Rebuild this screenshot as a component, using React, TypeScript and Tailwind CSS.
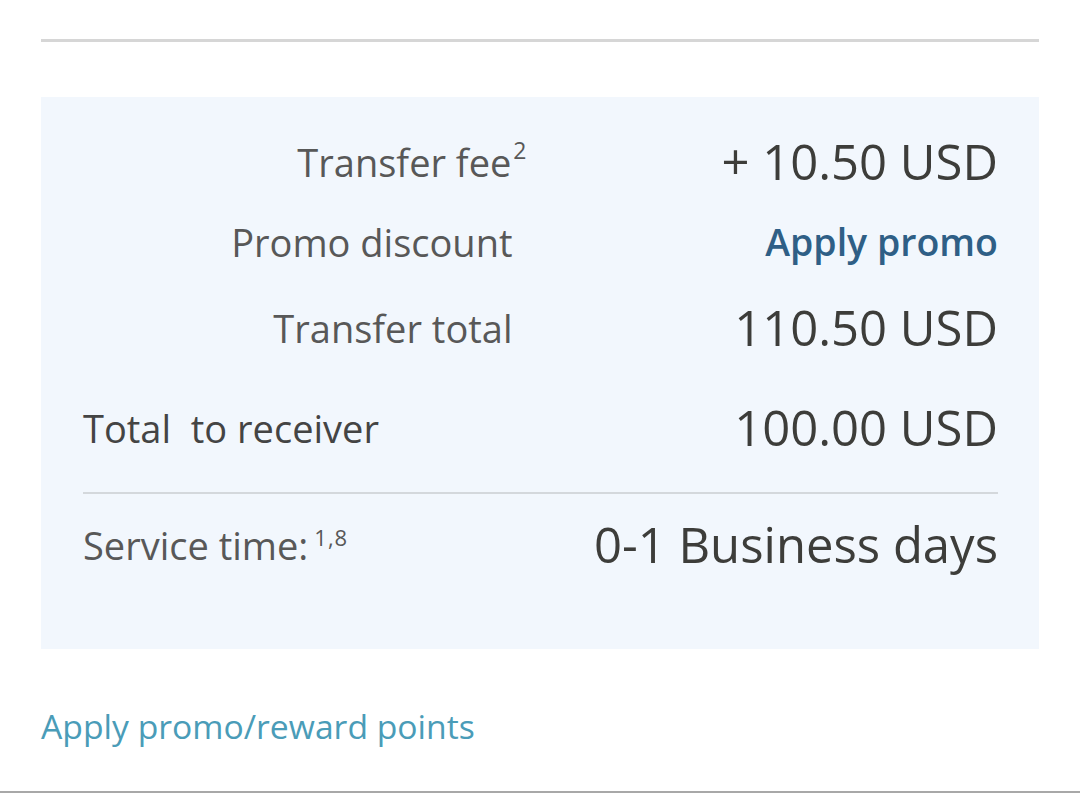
export default function App() {
  return (
    <div
      className="relative h-[793px] w-[1080px] overflow-hidden bg-white"
      style={{ fontFamily: '"Open Sans", "Noto Sans", sans-serif' }}
    >
      <div className="mx-[41px] pt-[39px]">
        <div className="h-[3px] bg-[#d6d6d6]" />

        <section className="mt-[55px] bg-[#f2f7fd] pb-[64px] pl-[42px] pr-[41px] pt-[25px]">
          <div className="grid h-[80px] grid-cols-2 items-center">
            <div className="whitespace-nowrap pr-[28px] text-right text-[38px] text-[#585858]">
              Transfer fee
              <sup className="-top-[18px] ml-[2px] mr-[-14px] text-[23px]">2</sup>
            </div>
            <div className="text-right text-[49px] text-[#3d3d3a]">+ 10.50 USD</div>
          </div>

          <div className="grid h-[80px] grid-cols-2 items-center">
            <div className="pr-[28px] text-right text-[38px] text-[#585858]">Promo discount</div>
            <div className="text-right text-[37.5px] font-semibold text-[#2f5f86]">Apply promo</div>
          </div>

          <div className="mt-[6px] grid h-[80px] grid-cols-2 items-center">
            <div className="pr-[28px] text-right text-[38px] text-[#585858]">Transfer total</div>
            <div className="text-right text-[49px] text-[#3d3d3a]">110.50 USD</div>
          </div>

          <div className="mt-[20px] flex h-[80px] items-center justify-between">
            <div className="whitespace-pre text-[38px] text-[#444]">Total  to receiver</div>
            <div className="text-[49px] text-[#3d3d3a]">100.00 USD</div>
          </div>

          <div className="mt-[24px] h-[2px] bg-[#d4d8dc]" />

          <div className="mt-[11px] flex h-[80px] items-center justify-between">
            <div className="text-[38px] text-[#585858]">
              Service time:
              <sup className="-top-[14px] ml-[6px] text-[22px] tracking-[1px]">1,8</sup>
            </div>
            <div className="text-[49px] text-[#3d3d3a]">0-1 Business days</div>
          </div>
        </section>

        <div className="mt-[52px] text-[33.7px] text-[#4a9cb8]">Apply promo/reward points</div>
      </div>

      <div className="absolute bottom-0 left-0 h-[2px] w-full bg-[#a8a8a8]" />
    </div>
  );
}
